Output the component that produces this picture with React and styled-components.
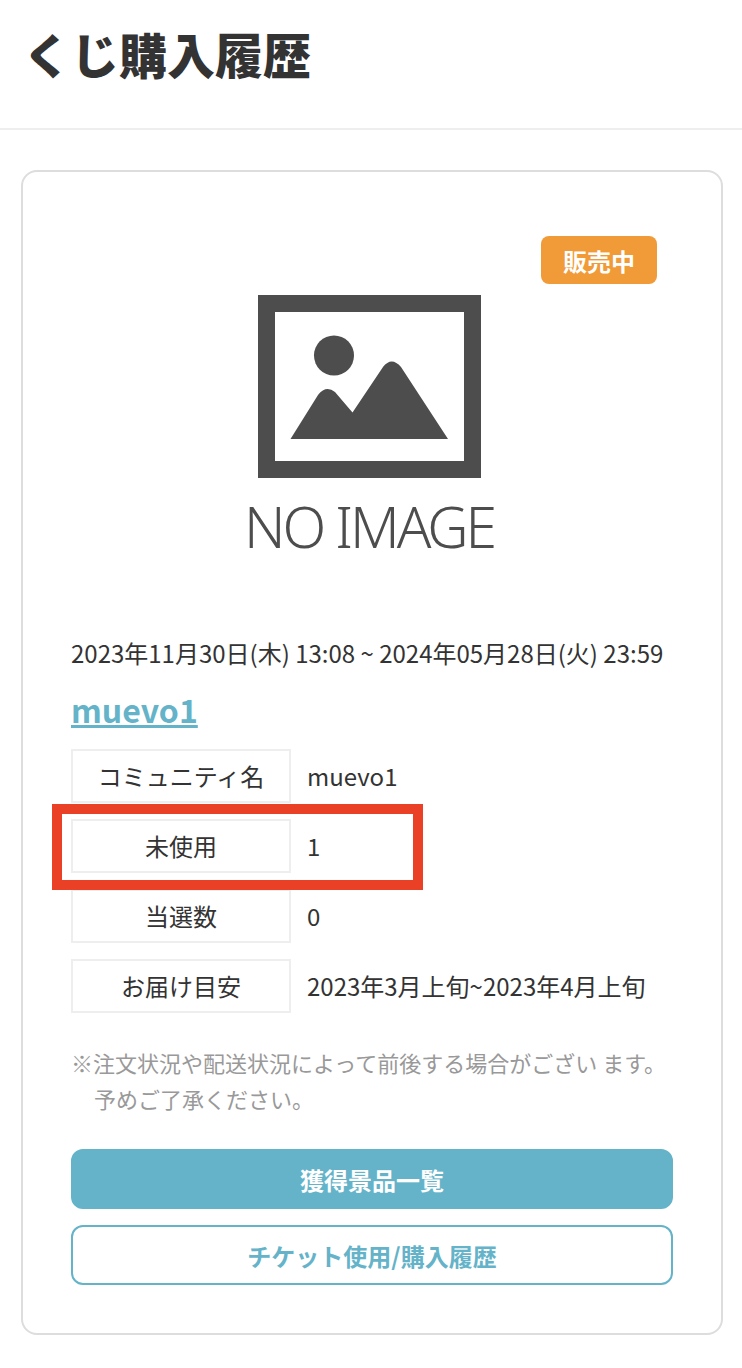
import React from "react";
import styled, { createGlobalStyle } from "styled-components";

const GlobalStyle = createGlobalStyle`
    html, body {
        margin: 0;
        padding: 0;
        background: #fff;
    }

    body {
        font-family: "Noto Sans CJK JP", "Noto Sans", sans-serif;
        color: #333;
    }
`

const rows = [
    { label: "コミュニティ名", value: "muevo1" },
    { label: "未使用", value: "1" },
    { label: "当選数", value: "0" },
    { label: "お届け目安", value: "2023年3月上旬~2023年4月上旬" },
];

const App = () => {
    return (
        <>
            <GlobalStyle />
            <Header>
                <Title>くじ購入履歴</Title>
            </Header>

            <Main>
                <Card>
                    <Badge>販売中</Badge>

                    <NoImage>
                        <svg width="223" height="183" viewBox="0 0 223 183">
                            <rect x="8.5" y="8.5" width="206" height="166" fill="none" stroke="#4d4d4d" strokeWidth="17" />
                            <circle cx="76" cy="60.5" r="20" fill="#4d4d4d" />
                            <path
                                d="M32.5 144 L60 100 Q68 90 77 97 L94.5 117.5 L125 72 Q133.5 61 143 72 L190 144 Z"
                                fill="#4d4d4d"
                            />
                        </svg>
                        <NoImageText>NO IMAGE</NoImageText>
                    </NoImage>

                    <Period>2023年11月30日(木) 13:08 ~ 2024年05月28日(火) 23:59</Period>
                    <LotName href="#">muevo1</LotName>

                    <InfoList>
                        {rows.map((row) => (
                            <InfoRow key={row.label}>
                                <InfoLabel>{row.label}</InfoLabel>
                                <InfoValue>{row.value}</InfoValue>
                            </InfoRow>
                        ))}
                        <Highlight />
                    </InfoList>

                    <Note>※注文状況や配送状況によって前後する場合がござい ます。<br />予めご了承ください。</Note>

                    <ButtonGroup>
                        <PrizeButton>獲得景品一覧</PrizeButton>
                        <PrizeButton $outline>チケット使用/購入履歴</PrizeButton>
                    </ButtonGroup>
                </Card>
            </Main>
        </>
    )
}

export default App;

const Header = styled.header`
    box-sizing: border-box;
    height: 130px;
    border-bottom: 2px solid #eee;
    display: flex;
    align-items: center;
    padding: 0 0 23px 23px;
`

const Title = styled.h1`
    margin: 0;
    font-size: 48px;
    font-weight: 900;
    line-height: 1;
    color: #333;
`

const Main = styled.main`
    padding: 40px 19px 33px 21px;
`

const Card = styled.section`
    position: relative;
    box-sizing: border-box;
    height: 1165px;
    border: 2px solid #ddd;
    border-radius: 16px;
    padding: 123px 48px 0;
    display: flex;
    flex-direction: column;
`

const Badge = styled.div`
    position: absolute;
    top: 64px;
    right: 64px;
    width: 116px;
    height: 48px;
    border-radius: 8px;
    background: #f19a38;
    color: #fff;
    font-size: 24px;
    font-weight: 700;
    display: flex;
    justify-content: center;
    align-items: center;
`

const NoImage = styled.div`
    display: flex;
    flex-direction: column;
    align-items: center;
    height: 296px;
    margin-right: 6px;
`

const NoImageText = styled.div`
    margin-top: 13px;
    font-family: "Noto Sans", sans-serif;
    font-weight: 300;
    font-size: 57px;
    line-height: 70px;
    letter-spacing: -3px;
    color: #4d4d4d;
    white-space: nowrap;
`

const Period = styled.div`
    margin-top: 44px;
    font-size: 24px;
    line-height: 36px;
    color: #333;
    white-space: nowrap;
`

const LotName = styled.a`
    margin-top: 18px;
    font-size: 32px;
    font-weight: 700;
    line-height: 40px;
    color: #64b3c9;
    text-decoration: underline;
    align-self: flex-start;
`

const InfoList = styled.div`
    position: relative;
    margin-top: 20px;
    display: flex;
    flex-direction: column;
    gap: 16px;
`

const InfoRow = styled.div`
    display: flex;
    align-items: center;
    gap: 16px;
`

const InfoLabel = styled.div`
    box-sizing: border-box;
    width: 220px;
    height: 54px;
    padding-bottom: 2px;
    border: 2px solid #eee;
    font-size: 24px;
    color: #333;
    display: flex;
    justify-content: center;
    align-items: center;
`

const InfoValue = styled.div`
    margin-bottom: 2px;
    font-size: 24px;
    color: #333;
    white-space: nowrap;
`

const Highlight = styled.div`
    position: absolute;
    top: 55px;
    left: -19px;
    width: 371px;
    height: 86px;
    box-sizing: border-box;
    border: 10px solid #ea4025;
`

const Note = styled.p`
    margin: 31px 0 0;
    padding-left: 23px;
    text-indent: -23px;
    font-size: 22px;
    line-height: 36px;
    color: #999;
    white-space: nowrap;
`

const ButtonGroup = styled.div`
    margin-top: 33px;
    display: flex;
    flex-direction: column;
    gap: 16px;
`

const PrizeButton = styled.button`
    box-sizing: border-box;
    height: 60px;
    padding: 0;
    border: 2px solid #64b3c9;
    border-radius: 12px;
    background: ${(props) => (props.$outline ? "#fff" : "#64b3c9")};
    color: ${(props) => (props.$outline ? "#64b3c9" : "#fff")};
    font-family: inherit;
    font-size: 24px;
    font-weight: 700;
    cursor: pointer;
`
